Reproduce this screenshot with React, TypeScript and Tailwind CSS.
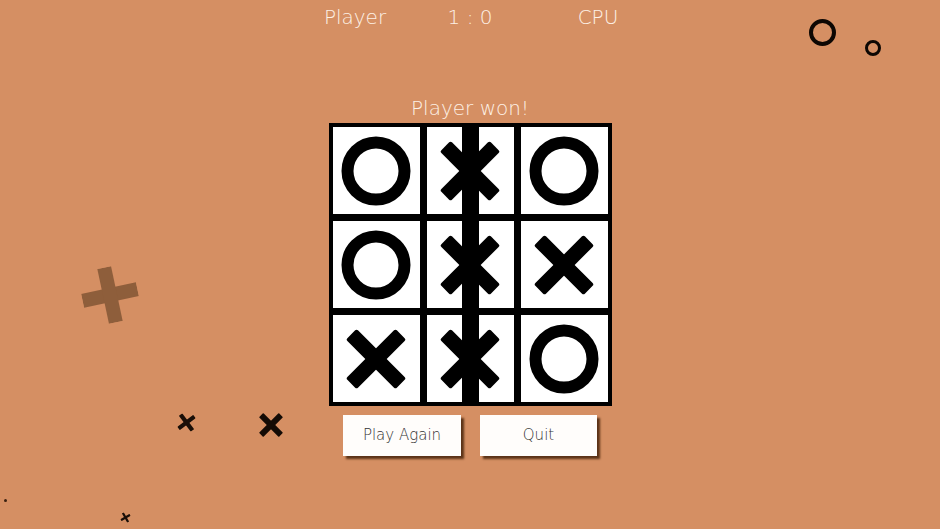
import React from 'react';

type Mark = 'X' | 'O';

const board: Mark[] = ['O', 'X', 'O', 'O', 'X', 'X', 'X', 'X', 'O'];

const XMark = ({ size = 60, color = '#000' }: { size?: number; color?: string }) => (
  <svg width={size} height={size} viewBox="0 0 60 60">
    <g transform="rotate(45 30 30)" fill={color}>
      <rect x="-5" y="22.5" width="70" height="15" rx="2" />
      <rect x="22.5" y="-5" width="15" height="70" rx="2" />
    </g>
  </svg>
);

const OMark = () => (
  <svg width="70" height="70" viewBox="0 0 70 70">
    <circle cx="35" cy="35" r="28.5" fill="none" stroke="#000" strokeWidth="12" />
  </svg>
);

const Cell = ({ mark }: { mark: Mark }) => (
  <div className="w-[87px] h-[87px] bg-white flex items-center justify-center">
    {mark === 'X' ? <XMark /> : <OMark />}
  </div>
);

export default function App() {
  return (
    <div
      className="relative w-[940px] h-[529px] overflow-hidden bg-[#d58f63] text-[#fdf1e6]"
      style={{ fontFamily: '"DejaVu Sans", "Liberation Sans", sans-serif' }}
    >
      {/* background decorations */}
      <div className="absolute left-[82px] top-[267px] rotate-[-12deg] opacity-80">
        <svg width="56" height="56" viewBox="0 0 56 56">
          <g fill="#7d5232">
            <rect x="0" y="21" width="56" height="14" />
            <rect x="21" y="0" width="14" height="56" />
          </g>
        </svg>
      </div>
      <div className="absolute left-[178px] top-[414px] rotate-[8deg]">
        <XMark size={17} color="#1a0f08" />
      </div>
      <div className="absolute left-[259px] top-[413px]">
        <XMark size={24} color="#140b05" />
      </div>
      <div className="absolute left-[121px] top-[513px] rotate-[15deg]">
        <XMark size={9} color="#1a0f08" />
      </div>
      <div className="absolute left-[4px] top-[499px] w-[3px] h-[3px] rounded-full bg-[#3a2010]" />
      <div className="absolute left-[809px] top-[19px] w-[27px] h-[27px] rounded-full border-[4px] border-[#0d0703]" />
      <div className="absolute left-[865px] top-[40px] w-[16px] h-[16px] rounded-full border-[3px] border-[#0d0703]" />

      {/* score */}
      <div className="flex justify-center pt-[4px]">
        <div className="flex pl-[26px] text-[20px] font-extralight leading-[26px]">
          <div className="w-[120px] text-center">Player</div>
          <div className="w-[110px] text-center">1 : 0</div>
          <div className="w-[146px] text-center">CPU</div>
        </div>
      </div>

      <div className="flex flex-col items-center mt-[65px]">
        <div className="text-[20px] font-extralight leading-[26px]">Player won!</div>

        <div className="relative mt-[2px] bg-black p-[4px] grid grid-cols-[87px_87px_87px] gap-[7px]">
          {board.map((m, i) => (
            <Cell key={i} mark={m} />
          ))}
          <div className="absolute left-[133px] top-0 w-[17px] h-full bg-black" />
        </div>

        <div className="flex gap-[19px] mt-[9px]">
          <button className="w-[118px] h-[41px] bg-[#fffdfb] text-[#333] text-[15px] font-extralight shadow-[3px_3px_2px_rgba(70,35,10,0.85)]">
            Play Again
          </button>
          <button className="w-[117px] h-[41px] bg-[#fffdfb] text-[#333] text-[15px] font-extralight shadow-[3px_3px_2px_rgba(70,35,10,0.85)]">
            Quit
          </button>
        </div>
      </div>
    </div>
  );
}
